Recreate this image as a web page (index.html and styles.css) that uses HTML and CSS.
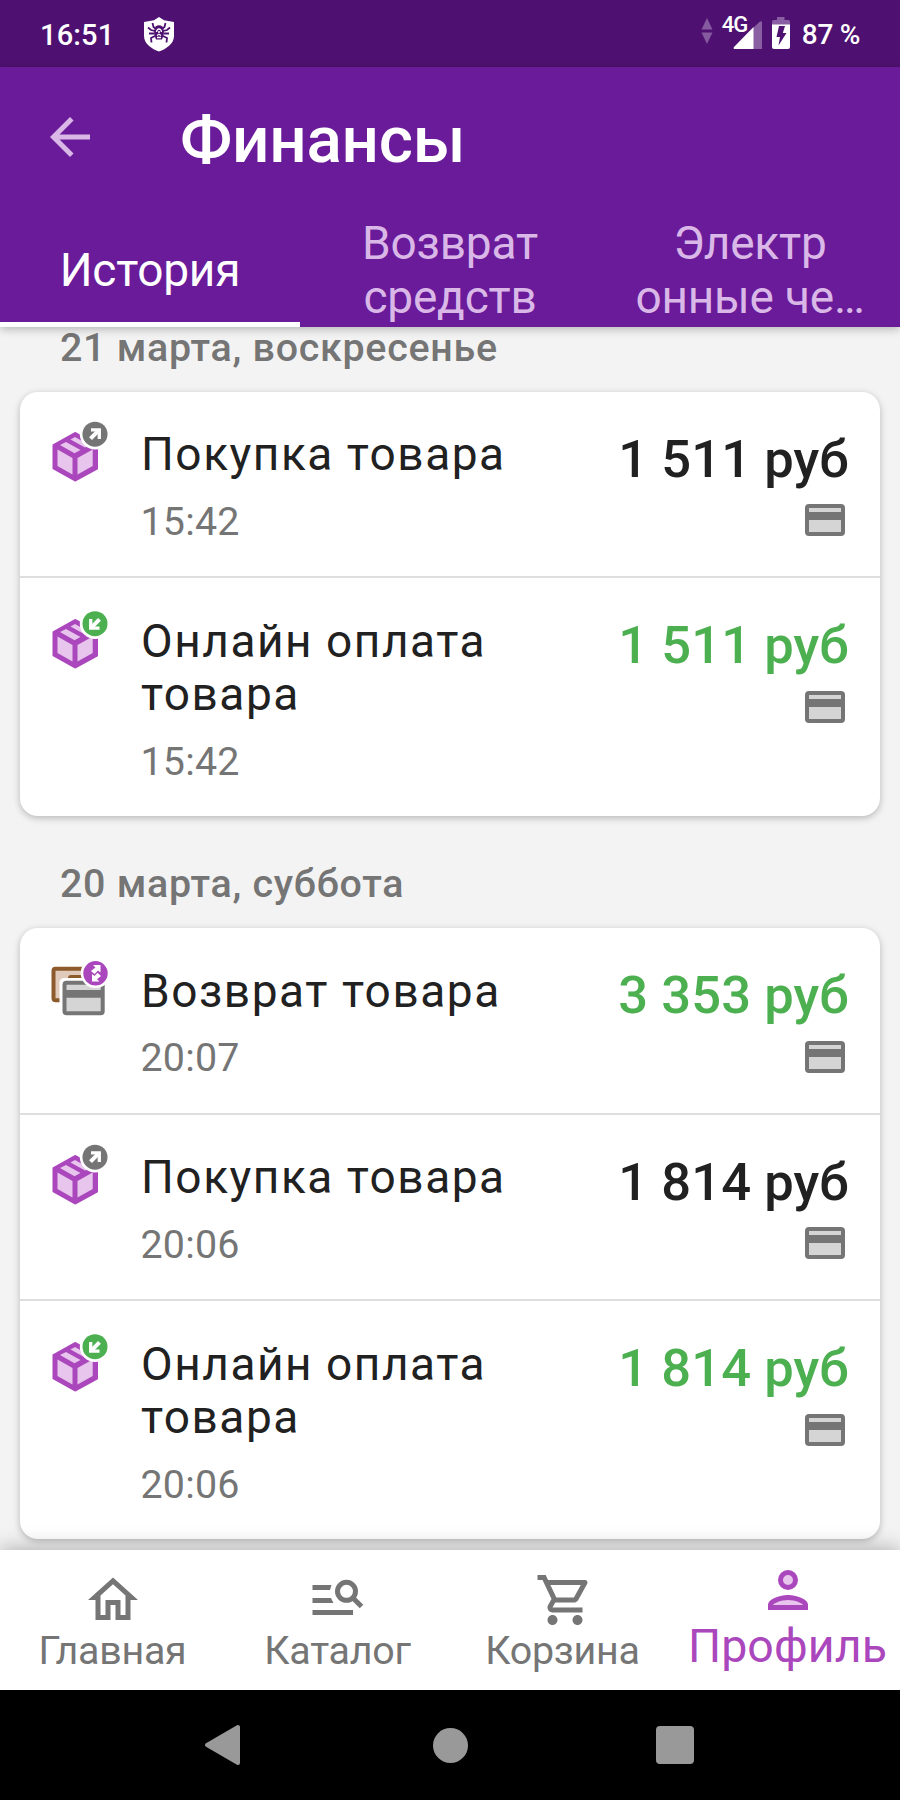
FILE: index.html
```html
<!DOCTYPE html>
<html lang="ru">
<head>
<meta charset="utf-8">
<title>Финансы</title>
<link rel="stylesheet" href="styles.css">
</head>
<body>
<svg width="0" height="0" class="defs" aria-hidden="true">
  <symbol id="box" viewBox="50 418 62 68">
    <path fill="#ab47bc" stroke="#ab47bc" stroke-width="2" stroke-linejoin="round" d="M75 433 97 445V468.500L75 480.500 53.500 468.500V445z"/>
    <path fill="#e7c5ec" d="M57.500 449.500 72.500 458V474.500L57.500 466zM77.500 458 92.700 449.500V466L77.500 474.500zM60 445 66 442 80.500 450 74.500 453.200zM70.500 439.500 75 437 90 445.500 85 447.500z"/>
  </symbol>
  <symbol id="box-out" viewBox="50 418 62 68">
    <use href="#box" x="50" y="418" width="62" height="68"/>
    <circle cx="95" cy="434.200" r="15.200" fill="#fff"/>
    <circle cx="95" cy="434.200" r="12.500" fill="#757575"/>
    <path fill="none" stroke="#fff" stroke-width="3.300" d="M91 429.800H99.300V439"/>
    <path stroke="#fff" stroke-width="4" d="M98.500 430.600 90.500 438.600"/>
  </symbol>
  <symbol id="box-in" viewBox="50 418 62 68">
    <use href="#box" x="50" y="418" width="62" height="68"/>
    <circle cx="95" cy="436.700" r="15.200" fill="#fff"/>
    <circle cx="95" cy="436.700" r="12.500" fill="#4caf50"/>
    <path fill="none" stroke="#fff" stroke-width="3.300" d="M99.500 441.200H90.700V432"/>
    <path stroke="#fff" stroke-width="4" d="M91.500 440.400 99.500 432.400"/>
  </symbol>
  <symbol id="refund" viewBox="50 954 62 68">
    <rect x="53.500" y="967.700" width="42" height="31.500" rx="2" fill="#e0cabb" stroke="#8d5a2b" stroke-width="4"/>
    <rect x="68" y="974" width="25" height="14" rx="3" fill="#8d5a2b"/>
    <path fill="#fff" d="M59.500 1003V982Q59.500 977 64.500 977H106V1003z"/>
    <rect x="64.500" y="981.700" width="38.200" height="30.500" rx="2" fill="#d5d5d5" stroke="#757575" stroke-width="4"/>
    <path fill="#757575" d="M64 989H103V996.800H64z"/>
    <circle cx="95.500" cy="972.300" r="14.800" fill="#fff"/>
    <circle cx="95.500" cy="972.300" r="12.200" fill="#ab47bc"/>
    <path fill="#fff" d="M93 964H100.500V971.500L98 969.500 94.500 973 91 970 95.500 966.500zM92 980.500V973L94.500 975 97.500 971.800 101 975 97 978.300 99.500 980.500z"/>
  </symbol>
  <symbol id="card" viewBox="0 0 40 32">
    <rect width="40" height="32" rx="4" fill="#757575"/>
    <path fill="#d5d5d5" d="M4 4H36V8H4zM4 16H36V28H4z"/>
  </symbol>
</svg>

<div class="screen">
  <div class="status">
    <span class="clock">16:51</span>
    <svg class="shield" width="32" height="35" viewBox="0 0 32 35">
      <path fill="#fff" d="M16 0 21 3.200 31 5V19C31 27 23 32 16 34.500 9 32 1 27 1 19V5L11 3.200z"/>
      <g fill="none" stroke="#4e1171" stroke-width="1.800"><path d="M13 12 10.500 10 9.500 6M12 14 8 13 5 10.500M11.500 16.500 6 16.500M12 19 8 21 8.500 25.500M19 12 21.500 10 22.500 6M20 14 24 13 27 10.500M20.500 16.500 26 16.500M20 19 24 21 23.500 25.500"/></g>
      <path fill="#4e1171" d="M12.500 9.500Q16 7 19.500 9.500L21 14 20.500 18.500 19 22.500H13L11.500 18.500 11 14z"/>
      <path fill="none" stroke="#fff" stroke-width="1.300" d="M13.500 15Q14 12 16 12T18.500 15M14 18.500 16 17.300 18 18.500M15 15H17M14 20.500H18"/>
    </svg>
    <div class="indicators">
      <svg class="updown" width="12" height="27" viewBox="0 0 12 27"><path fill="#865a9f" d="M6 0 11.500 11.500H.5zM.5 14.500H11.500L6 26z"/></svg>
      <div class="signal">
        <svg width="40" height="36" viewBox="0 0 40 36"><path fill="#8a5ea3" d="M39 7.500Q39 5.500 37 6.500L30 13V34H39z"/><path fill="#fff" d="M30.500 12V34H11Q10 33 11 32z"/></svg>
        <span class="net">4G</span>
      </div>
      <svg class="battery" width="20" height="33" viewBox="0 0 20 33"><path fill="#8a5ea3" d="M6 0H13.500V3H17.500Q19 3 19 5V8H1V5Q1 3 2.500 3H6z"/><path fill="#fff" d="M1 7.500H19V30Q19 32 17 32H3Q1 32 1 30z"/><path fill="#4e1171" d="M8 9H14L11.800 16H15.500L7.500 28.500 9 20H5.500z"/></svg>
      <span class="pct">87 %</span>
    </div>
  </div>

  <header class="appbar">
    <div class="titlebar">
      <svg class="back" width="60" height="60" viewBox="0 0 24 24"><path fill="#d9b8e8" d="M20 11H7.830l5.590-5.590L12 4l-8 8 8 8 1.410-1.410L7.830 13H20z"/></svg>
      <h1 class="title">Финансы</h1>
    </div>
    <nav class="tabs">
      <div class="tab tab-active">История</div>
      <div class="tab">Возврат<br>средств</div>
      <div class="tab">Электр<br>онные че…</div>
    </nav>
  </header>

  <main class="history">
    <h2 class="date date-first">21 марта, воскресенье</h2>
    <section class="group">
      <div class="row">
        <svg class="kind"><use href="#box-out"/></svg>
        <div class="info"><div class="name">Покупка товара</div><div class="time">15:42</div></div>
        <div class="sum"><div class="amount">1 511 руб</div><svg class="card"><use href="#card"/></svg></div>
      </div>
      <div class="row tall">
        <svg class="kind"><use href="#box-in"/></svg>
        <div class="info"><div class="name">Онлайн оплата<br>товара</div><div class="time">15:42</div></div>
        <div class="sum"><div class="amount income">1 511 руб</div><svg class="card"><use href="#card"/></svg></div>
      </div>
    </section>
    <h2 class="date">20 марта, суббота</h2>
    <section class="group">
      <div class="row">
        <svg class="kind"><use href="#refund"/></svg>
        <div class="info"><div class="name">Возврат товара</div><div class="time">20:07</div></div>
        <div class="sum"><div class="amount income">3 353 руб</div><svg class="card"><use href="#card"/></svg></div>
      </div>
      <div class="row">
        <svg class="kind"><use href="#box-out"/></svg>
        <div class="info"><div class="name">Покупка товара</div><div class="time">20:06</div></div>
        <div class="sum"><div class="amount">1 814 руб</div><svg class="card"><use href="#card"/></svg></div>
      </div>
      <div class="row tall">
        <svg class="kind"><use href="#box-in"/></svg>
        <div class="info"><div class="name">Онлайн оплата<br>товара</div><div class="time">20:06</div></div>
        <div class="sum"><div class="amount income">1 814 руб</div><svg class="card"><use href="#card"/></svg></div>
      </div>
    </section>
  </main>

  <nav class="bottom">
    <a class="item"><svg width="60" height="60" viewBox="0 0 24 24"><path fill="#757575" d="M12 5.690l5 4.500V18h-2v-6H9v6H7v-7.810l5-4.500M12 3L2 12h3v8h6v-6h2v6h6v-8h3L12 3z"/></svg><span>Главная</span></a>
    <a class="item"><svg width="60" height="60" viewBox="0 0 60 60"><path fill="#757575" d="M4.500 15H23.500L22 20H4.500zM4.500 28H23L25.500 33H4.500zM4.500 40H45V45H4.500z"/><circle cx="38.500" cy="21.300" r="9" fill="none" stroke="#757575" stroke-width="5"/><path stroke="#757575" stroke-width="5" d="M44.500 27.500 53.500 36.500"/></svg><span>Каталог</span></a>
    <a class="item"><svg class="cart" width="60" height="60" viewBox="0 0 24 24"><path fill="#757575" d="M15.550 13c.75 0 1.410-.41 1.750-1.030l3.580-6.490A.996.996 0 0 0 20.010 4H5.210l-.94-2H1v2h2l3.600 7.590-1.350 2.440C4.520 15.370 5.480 17 7 17h12v-2H7l1.100-2h7.450zM6.160 6h12.150l-2.760 5H8.530L6.160 6zM7 18c-1.100 0-1.990.9-1.990 2S5.900 22 7 22s2-.9 2-2-.9-2-2-2zm10 0c-1.100 0-1.990.9-1.990 2s.89 2 1.990 2 2-.9 2-2-.9-2-2-2z"/></svg><span>Корзина</span></a>
    <a class="item current"><svg width="60" height="60" viewBox="0 0 24 24"><circle cx="12" cy="8" r="3" fill="#e7c5ec" stroke="#ab47bc" stroke-width="2"/><path fill="#ab47bc" d="M12 14c-2.670 0-8 1.340-8 4v2h16v-2c0-2.660-5.330-4-8-4z"/><path fill="#e7c5ec" d="M6 18c.22-.72 3.310-2 6-2 2.700 0 5.800 1.290 6 2z"/></svg><span>Профиль</span></a>
  </nav>

  <div class="sysnav">
    <div class="key"><svg class="tri" width="40" height="44" viewBox="0 0 40 44"><path fill="#999" stroke="#999" stroke-width="4" stroke-linejoin="round" d="M4 22 35 4V40z"/></svg></div>
    <div class="key"><span class="dot"></span></div>
    <div class="key"><span class="square"></span></div>
  </div>
</div>
</body>
</html>
```
FILE: styles.css
```css
* { box-sizing: border-box; }
body { margin: 0; background: #000; font-family: Roboto, "Noto Sans", sans-serif; }
h1, h2 { margin: 0; font-weight: 500; }
svg { display: block; flex: none; }
.defs { position: absolute; }

.screen { width: 900px; height: 1800px; display: flex; flex-direction: column; overflow: hidden; background: #f3f3f3; }

.status { height: 67px; flex: none; display: flex; align-items: flex-start; background: #4e1171; color: #fff; font-weight: 500; font-size: 29px; line-height: 34px; padding: 0 40px; }
.clock { padding-top: 18px; width: 103px; letter-spacing: .15px; }
.shield { margin-top: 17px; }
.indicators { margin-left: auto; display: flex; align-items: flex-start; }
.updown { margin-top: 18px; margin-right: 10px; }
.signal { position: relative; width: 48px; padding-top: 15px; }
.net { position: absolute; left: -1px; top: 14px; font-size: 22px; line-height: 22px; letter-spacing: -1px; }
.battery { margin-top: 17px; margin-right: 11px; }
.pct { padding-top: 18px; font-size: 28px; letter-spacing: -.3px; }

.appbar { position: relative; z-index: 2; height: 260px; flex: none; background: #6a1b9a; box-shadow: 0 2px 9px rgba(0,0,0,.27); }
.titlebar { height: 147px; display: flex; padding-left: 40px; }
.back { margin-top: 40px; }
.title { margin-left: 80px; padding-top: 35px; color: #fff; font-size: 65.600px; line-height: 76px; letter-spacing: -.25px; }
.tabs { height: 113px; display: grid; grid-template-columns: repeat(3, 300px); grid-template-rows: 113px; }
.tab { display: flex; align-items: center; justify-content: center; text-align: center; padding-bottom: 2px; font-size: 46px; line-height: 54px; letter-spacing: -.2px; color: #d9b8e8; white-space: nowrap; }
.tab-active { color: #fff; box-shadow: inset 0 -5px #fff; }

.history { height: 1223px; flex: none; }
.date { height: 112px; padding: 45px 60px 0; color: #757575; font-size: 39.400px; line-height: 46px; letter-spacing: .720px; }
.date-first { height: 64.500px; padding-top: 0; line-height: 41px; }
.group { margin: 0 20px; background: #fff; border-radius: 18px; box-shadow: 0 2px 7px rgba(0,0,0,.25); }
.row { height: 184.500px; display: flex; padding: 0 30px; }
.row + .row { height: 186.500px; border-top: 2px solid #dedede; }
.row + .tall { height: 240px; }
.kind { width: 62px; height: 68px; margin-top: 26.500px; }
.info { margin-left: 29px; padding-top: 36.500px; flex: 1; }
.name { color: #212121; font-size: 46px; line-height: 53.600px; letter-spacing: 1.540px; white-space: nowrap; }
.time { margin: 17px 0 0 -.5px; color: #757575; font-size: 39.400px; line-height: 46px; letter-spacing: .200px; }
.sum { display: flex; flex-direction: column; align-items: flex-end; padding-top: 37px; }
.amount { margin-right: 1px; color: #212121; font-size: 52.500px; font-weight: 500; line-height: 60px; letter-spacing: .100px; white-space: nowrap; }
.income { color: #4caf50; }
.card { width: 40px; height: 32px; margin: 15.500px 5px 0 0; }

.bottom { position: relative; z-index: 2; height: 140px; flex: none; background: #fff; display: grid; grid-template-columns: repeat(4, 225px); box-shadow: 0 -1px 20px rgba(0,0,0,.3); }
.item { display: flex; flex-direction: column; align-items: center; padding-top: 20px; color: #757575; font-size: 39.400px; line-height: 46px; letter-spacing: -.250px; }
.item span { margin-top: -2px; white-space: nowrap; }
.cart { margin-left: 4px; }
.current { padding-top: 10px; color: #ab47bc; font-size: 46.500px; letter-spacing: .1px; }
.current span { margin-top: 3px; }

.sysnav { position: relative; z-index: 3; height: 110px; flex: none; background: #000; display: grid; grid-template-columns: repeat(3, 225px); justify-content: center; }
.key { display: flex; align-items: center; justify-content: center; }
.tri { margin-right: 5px; }
.dot { width: 35px; height: 35px; border-radius: 50%; background: #999; }
.square { width: 38px; height: 38px; border-radius: 4px; background: #999; }
```
